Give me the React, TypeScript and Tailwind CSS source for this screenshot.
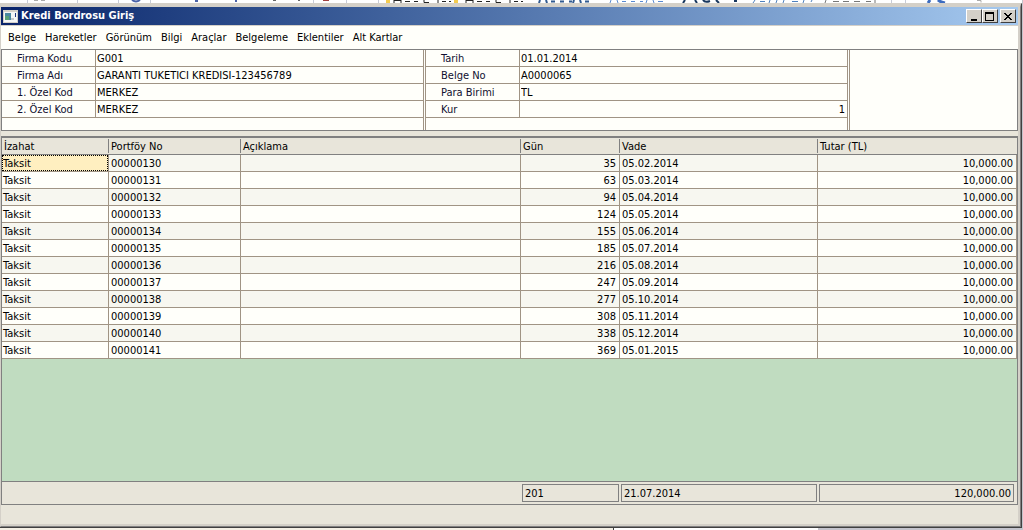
import { useState } from 'react';

const menuItems = ['Belge', 'Hareketler', 'Görünüm', 'Bilgi', 'Araçlar', 'Belgeleme', 'Eklentiler', 'Alt Kartlar'];

const firmaFields = [
  { id: 'firmaKodu', label: 'Firma Kodu', value: 'G001' },
  { id: 'firmaAdi', label: 'Firma Adı', value: 'GARANTI TUKETICI KREDISI-123456789' },
  { id: 'ozelKod1', label: '1. Özel Kod', value: 'MERKEZ' },
  { id: 'ozelKod2', label: '2. Özel Kod', value: 'MERKEZ' },
];

const belgeFields = [
  { id: 'tarih', label: 'Tarih', value: '01.01.2014' },
  { id: 'belgeNo', label: 'Belge No', value: 'A0000065' },
  { id: 'paraBirimi', label: 'Para Birimi', value: 'TL' },
  { id: 'kur', label: 'Kur', value: '1', right: true },
];

const rows = [
  { no: '00000130', gun: 35, vade: '05.02.2014' },
  { no: '00000131', gun: 63, vade: '05.03.2014' },
  { no: '00000132', gun: 94, vade: '05.04.2014' },
  { no: '00000133', gun: 124, vade: '05.05.2014' },
  { no: '00000134', gun: 155, vade: '05.06.2014' },
  { no: '00000135', gun: 185, vade: '05.07.2014' },
  { no: '00000136', gun: 216, vade: '05.08.2014' },
  { no: '00000137', gun: 247, vade: '05.09.2014' },
  { no: '00000138', gun: 277, vade: '05.10.2014' },
  { no: '00000139', gun: 308, vade: '05.11.2014' },
  { no: '00000140', gun: 338, vade: '05.12.2014' },
  { no: '00000141', gun: 369, vade: '05.01.2015' },
];

type FieldProps = { id: string; label: string; value: string; right?: boolean };

function Field({ id, label, value, right }: FieldProps) {
  const [text, setText] = useState(value);
  return (
    <div className="flex h-[17px] border-b border-[#a09484]">
      <label
        htmlFor={id}
        className="w-[94px] shrink-0 border-r border-[#a09484] pt-0.5 pl-[15px] leading-[14px] text-[#101030]"
      >
        {label}
      </label>
      <input
        id={id}
        value={text}
        onChange={(e) => setText(e.target.value)}
        className={`min-w-0 flex-1 bg-transparent pt-0.5 pr-0.5 pl-px leading-[14px] outline-none ${right ? 'text-right' : ''}`}
      />
    </div>
  );
}

// slice of the ribbon of the application behind
function Ribbon() {
  return (
    <svg className="block h-[3px] w-full bg-white" viewBox="0 0 1023 3" preserveAspectRatio="xMinYMin slice">
      <path d="M27.5 0v3M77.5 0v3M118.5 0v3M150.5 0v3M313.5 0v3M346.5 0v3M378.5 0v3M891.5 0v3M905.5 0v3" stroke="#c8ccd8" />
      <path d="M34 .5h4M41 .5h4" stroke="#aaa" />
      <path d="M273 .5h3M298 .5h2" stroke="#666" />
      <path d="M132 0q4 3 8 0M195 1h3M236 0v2" stroke="#4a62a8" fill="none" strokeWidth="2" />
      <path d="M323 .5h6" stroke="#a04040" />
      <path d="M386 0h4v3h-4zM454 0h4v3h-4z" fill="#f4cc50" />
      <path
        d="M394 0v3M401 0v3M394 .5h7M405 1.5h5M414 1.5h4M424 0v2.5M429 2.5h-5M438 0v3M442 1.5h4M449 1.5h2M466 0v3M473 0v3M466 .5h7M477 1.5h5M486 1.5h4M496 0v2.5M501 2.5h-5M510 0v3M514 1.5h4M521 1.5h2"
        stroke="#222"
        fill="none"
      />
      <path d="M540 0l-1 3M546 0l1 3M551 1.5h4M560 1.5h4M569 1.5h3M574 0l-1 3M580 0l1 3M585 1.5h4" stroke="#315a90" strokeWidth="2" />
      <path d="M611 0l-1 3M617 0l1 3M622 1.5h4M631 1.5h4M640 1.5h3M647 0l-1 3M653 0l1 3M658 1.5h5" stroke="#5a8ad0" />
      <path d="M685 0l-2 3M695 0l2 3M703 0q2 3 7 1M716 0l3 3M734 1h3" stroke="#17365d" strokeWidth="2" fill="none" />
      <path d="M755 0l-2 3M760 1.5h5M770 0l-1 3M777 0l-1 3M784 0l-1 3M792 1.5h6M804 0l-1 3M812 0l-1 2" stroke="#4f81bd" />
      <path d="M826 0l-1 3M833 1.5h6M843 1.5h6M854 1.5h6M866 1.5h5M875 0v3" stroke="#777" />
      <path d="M930 0l-2 3M938 0q2 2 7 3" stroke="#3c6cc0" strokeWidth="3" fill="none" />
      <path d="M977 .5h4v2" stroke="#aaa" fill="none" />
    </svg>
  );
}

const captionButton =
  'flex h-[14px] w-4 items-center justify-center border border-t-white border-l-white border-r-[#404040] border-b-[#404040] bg-[#d4d0c8]';

function TitleBar() {
  return (
    <header className="flex h-[18px] items-center bg-linear-to-r from-[#0a246a] to-[#a6caf0] pr-0.5 pl-0.5">
      <svg width="15" height="13" viewBox="0 0 15 13" className="shrink-0" shapeRendering="crispEdges">
        <path d="M0 0h15v13H0z" fill="#d4d0c8" />
        <path d="M1 2h13v10H1z" fill="#f4f6f6" />
        <path d="M2 3h6v7H2z" fill="#4a88a0" />
        <path d="M2 6h4v4H2z" fill="#58a078" />
        <path d="M12 3h1v4h-1z" fill="#203880" />
        <path d="M8 8h3v2H8z" fill="#c4c8cc" />
      </svg>
      <h1 className="ml-[3px] flex-1 pt-px text-[11px] font-bold text-white">Kredi Bordrosu Giriş</h1>
      <button type="button" aria-label="Simge durumuna küçült" className={captionButton}>
        <svg width="12" height="11" viewBox="0 0 12 11" shapeRendering="crispEdges">
          <path d="M3 8h6v2H3z" />
        </svg>
      </button>
      <button type="button" aria-label="Ekranı kapla" className={captionButton}>
        <svg width="12" height="11" viewBox="0 0 12 11" shapeRendering="crispEdges">
          <path d="M1 1h9v9H1zM2 3v6h7V3z" fillRule="evenodd" />
        </svg>
      </button>
      <button type="button" aria-label="Kapat" className={`${captionButton} ml-0.5`}>
        <svg width="12" height="11" viewBox="0 0 12 11" shapeRendering="crispEdges">
          <path d="M2 2h2v1h1v1h2V3h1V2h2v1H9v1H8v1H7v1h1v1h1v1h1v1H8V8H7V7H5v1H4v1H2V8h1V7h1V6h1V5H4V4H3V3H2z" />
        </svg>
      </button>
    </header>
  );
}

function TaksitTable() {
  const th = 'border-b border-[#808080] p-0 text-left font-normal';
  const td = 'border-r border-b border-[#a09484] p-0';
  const cell = 'h-4 pt-0.5 pr-[3px] pl-0.5';
  return (
    <table className="w-full table-fixed border-separate border-spacing-0">
      <colgroup>
        <col className="w-[107px]" />
        <col className="w-[132px]" />
        <col />
        <col className="w-[99px]" />
        <col className="w-[198px]" />
        <col className="w-[199px]" />
      </colgroup>
      <thead>
        <tr className="bg-[#e8e5da] leading-[14px]">
          <th className={th}>
            <div className={cell}>İzahat</div>
          </th>
          {['Portföy No', 'Açıklama', 'Gün', 'Vade', 'Tutar (TL)'].map((title) => (
            <th key={title} className={th}>
              <div className="-ml-px flex h-4 py-px">
                <span className="border-l border-[#808080] pt-px pl-0.5">{title}</span>
              </div>
            </th>
          ))}
        </tr>
      </thead>
      <tbody>
        {rows.map((row, i) => (
          <tr key={row.no} className="bg-[#fffffa] leading-[14px] odd:bg-[#f7f7f0]">
            <td className={td}>
              <div
                className={`h-4 pt-0.5 pl-px ${i === 0 ? 'bg-[#ffefc0] outline-1 -outline-offset-1 outline-dotted outline-black' : ''}`}
              >
                Taksit
              </div>
            </td>
            <td className={td}>
              <div className={cell}>{row.no}</div>
            </td>
            <td className={td}></td>
            <td className={td}>
              <div className={`${cell} text-right`}>{row.gun}</div>
            </td>
            <td className={td}>
              <div className={cell}>{row.vade}</div>
            </td>
            <td className={td}>
              <div className={`${cell} text-right`}>10,000.00</div>
            </td>
          </tr>
        ))}
      </tbody>
    </table>
  );
}

export default function App() {
  const total = 'h-[18px] border border-[#808080] px-0.5 pt-0.5 leading-[14px]';
  return (
    <div className="flex min-h-screen flex-col bg-[#c4c4cc] pr-px font-['DejaVu_Sans_Condensed','Noto_Sans',sans-serif] text-[11px] text-black">
      <Ribbon />
      <div className="flex flex-1 flex-col border-t border-r border-b border-t-[#d4d0c8] border-r-[#404040] border-b-[#404040]">
        <div className="flex flex-1 flex-col border-t-3 border-r border-b border-l border-t-[#d4d0c8] border-r-[#808080] border-b-[#808080] border-l-[#d4d0c8] bg-[#d4d0c8] pr-0.5 pb-0.5">
          <TitleBar />
          <main className="flex flex-1 flex-col border-t border-[#d4d0c8] bg-[#e8e5da]">
            <nav className="flex h-[23px] items-center gap-[9px] bg-[#fffffa] pt-0.5 pl-[7px]">
              {menuItems.map((item) => (
                <button key={item} type="button" className="whitespace-nowrap">
                  {item}
                </button>
              ))}
            </nav>

            <form className="grid grid-cols-[422fr_423fr_168fr] gap-px border border-[#808080] bg-[#fffffa]">
              <section className="border-r border-[#a09484] pb-3">
                {firmaFields.map((f) => (
                  <Field key={f.id} {...f} />
                ))}
              </section>
              <section className="border-x border-[#a09484] pb-3">
                {belgeFields.map((f) => (
                  <Field key={f.id} {...f} />
                ))}
              </section>
              <section className="border-l border-[#a09484]" />
            </form>

            <div className="mt-[5px] mb-[19px] flex flex-1 flex-col border border-t-2 border-[#808080]">
              <TaksitTable />
              <div className="flex-1 bg-[#c0dcc0]" />
              <div className="grid grid-cols-[1fr_97px_196px_195px] gap-0.5 border-t border-[#808080] py-0.5 pr-[3px]">
                <span />
                <output className={total}>201</output>
                <output className={total}>21.07.2014</output>
                <output className={`${total} text-right`}>120,000.00</output>
              </div>
            </div>
          </main>
        </div>
      </div>
      {/* windows underneath */}
      <div className="flex h-0.5">
        <div className="w-3/5 bg-[#f4efe4]" />
        <div className="w-1/5 border-l border-[#404040] bg-white" />
      </div>
    </div>
  );
}
